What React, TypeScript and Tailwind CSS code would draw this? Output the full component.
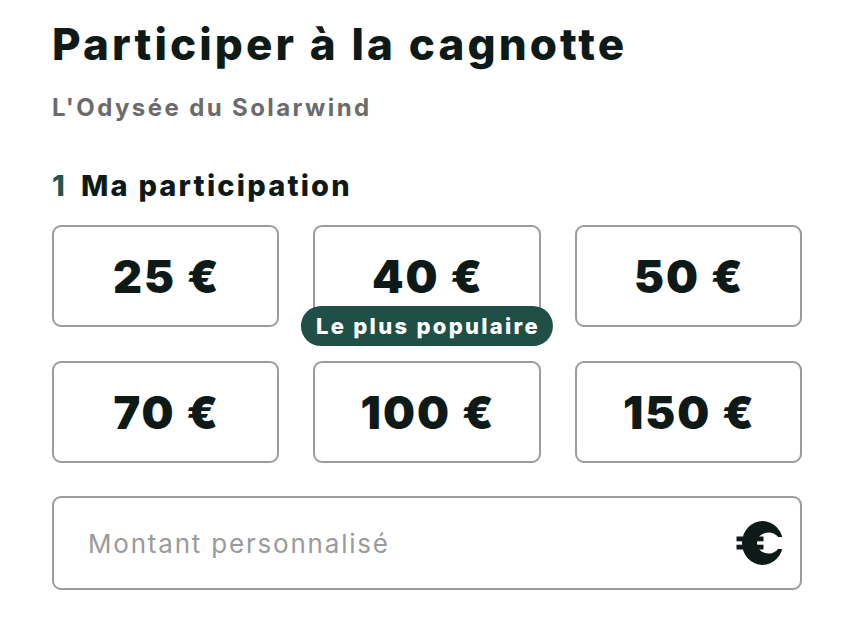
const AMOUNTS = [25, 40, 50, 70, 100, 150];

function EuroIcon() {
  return (
    <svg width="48" height="44" viewBox="0 0 48 44" className="shrink-0">
      <ellipse cx="26.5" cy="22" rx="20.5" ry="22" fill="#0d1a18" />
      <ellipse cx="32.5" cy="22" rx="11.5" ry="10.5" fill="#fff" />
      <rect x="32" y="16" width="16" height="12" fill="#fff" />
      <rect x="0.5" y="15.5" width="27" height="4.8" fill="#0d1a18" />
      <rect x="0.5" y="23.7" width="27" height="4.8" fill="#0d1a18" />
    </svg>
  );
}

export default function App() {
  return (
    <div className="min-h-screen bg-white text-[#0d1a18]" style={{ fontFamily: "Inter, 'Noto Sans', sans-serif" }}>
      <div className="w-[750px] ml-[52px] pt-[18px]">
        <h1 className="text-[44px] leading-[52px] font-extrabold tracking-[3.1px]">Participer à la cagnotte</h1>
        <p className="mt-[24px] text-[24px] leading-[28px] font-bold tracking-[2.4px] text-[#6b6b6b]">L'Odysée du Solarwind</p>

        <h2 className="mt-[48px] text-[29px] leading-[32px] font-extrabold flex gap-[14px] tracking-[2.2px]">
          <span className="text-[#25564d]">1</span>
          <span>Ma participation</span>
        </h2>

        <div className="mt-[23px] grid grid-cols-3 gap-x-[34px] gap-y-[34px]">
          {AMOUNTS.map((a) => (
            <div
              key={a}
              className="relative h-[102px] rounded-[9px] border-2 border-[#9b9b9b] flex items-center justify-center"
            >
              <span className="text-[45px] font-black leading-none tracking-[2px] pl-[2px]">{a} €</span>
              {a === 40 && (
                <span className="absolute left-1/2 -translate-x-1/2 top-[79px] whitespace-nowrap rounded-full bg-[#1f4f47] pl-[15px] pr-[13px] h-[40px] flex items-center text-[22px] font-extrabold tracking-[2.3px] text-white">
                  Le plus populaire
                </span>
              )}
            </div>
          ))}
        </div>

        <div className="mt-[33px] h-[94px] rounded-[9px] border-2 border-[#9b9b9b] flex items-center pl-[34px] pr-[16px]">
          <span className="flex-1 text-[26px] tracking-[1.8px] text-[#9a9a9a]">Montant personnalisé</span>
          <EuroIcon />
        </div>
      </div>
    </div>
  );
}
